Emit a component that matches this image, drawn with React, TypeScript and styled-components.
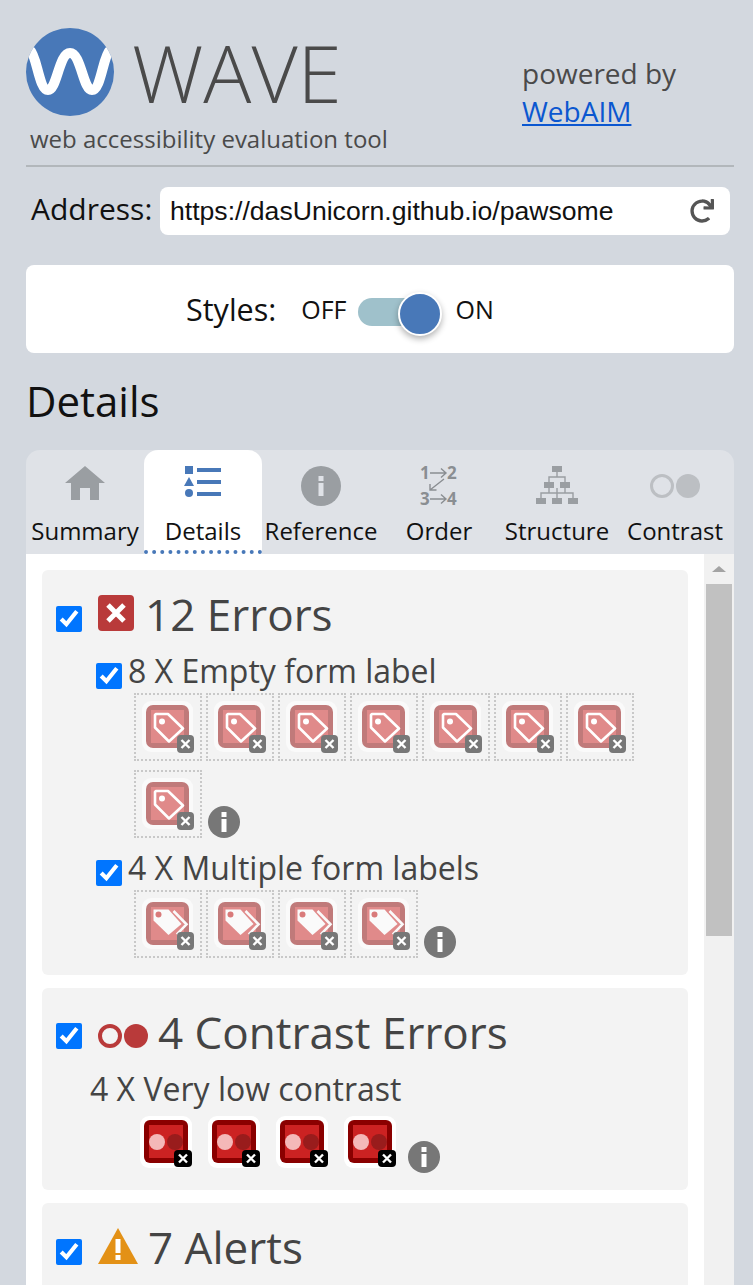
import React from 'react'
import styled, { createGlobalStyle } from 'styled-components'
import { FaRedo } from 'react-icons/fa'

const GlobalStyle = createGlobalStyle`
  html, body {
    margin: 0;
    padding: 0;
    background: #d3d8df;
  }
  * {
    box-sizing: border-box;
  }
`

const Page = styled.div`
  width: 753px;
  height: 1285px;
  overflow: hidden;
  padding: 28px 19px 0 26px;
  font-family: 'Open Sans', sans-serif;
  display: flex;
  flex-direction: column;
`

const Header = styled.header`
  display: flex;
  height: 139px;
  border-bottom: 2px solid #b2b7bb;
`

const Brand = styled.div`
  width: 496px;
  flex: none;
`

const BrandTop = styled.div`
  display: flex;
  align-items: center;
  gap: 18px;
  height: 88px;
`

const WaveTitle = styled.span`
  font-weight: 300;
  font-size: 80px;
  line-height: 88px;
  color: #4a4a4a;
`

const Tagline = styled.div`
  margin: 6px 0 0 4px;
  font-size: 24px;
  line-height: 33px;
  color: #4a4a4a;
`

const Powered = styled.div`
  margin-top: 26px;
  font-size: 28px;
  line-height: 38px;
  color: #4a4a4a;
`

const PoweredLink = styled.a`
  color: #0b57d0;
  text-decoration: underline;
`

const AddressRow = styled.div`
  display: flex;
  align-items: center;
  margin-top: 20px;
  padding-left: 5px;
  height: 48px;
`

const AddressLabel = styled.label`
  font-size: 30px;
  line-height: 40px;
  color: #111;
  width: 129px;
  flex: none;
  margin-bottom: 4px;
`

const AddressBox = styled.div`
  width: 570px;
  height: 48px;
  background: #fff;
  border-radius: 8px;
  display: flex;
  align-items: center;
  justify-content: space-between;
  padding: 0 16px 0 10px;
  font-family: 'Liberation Sans', Arial, sans-serif;
  font-size: 26.6px;
  color: #111;
  svg {
    color: #555;
  }
`

const StylesPanel = styled.div`
  margin-top: 30px;
  height: 88px;
  background: #fff;
  border-radius: 8px;
  display: flex;
  align-items: center;
  padding-left: 160px;
`

const StylesLabel = styled.span`
  font-size: 30.5px;
  color: #111;
  margin-right: 25px;
`

const ToggleText = styled.span`
  font-size: 25px;
  color: #111;
`

const Toggle = styled.div`
  position: relative;
  width: 74px;
  height: 28px;
  margin: 6px 24px 0 11px;
  border-radius: 14px;
  background: #9fc1cb;
`

const Knob = styled.span`
  position: absolute;
  right: -10px;
  top: -6px;
  width: 44px;
  height: 44px;
  border-radius: 50%;
  background: #4878b8;
  border: 2px solid #fff;
  box-shadow: 0 3px 6px rgba(0, 0, 0, 0.3);
`

const PageTitle = styled.h2`
  margin: 21px 0 22px 0;
  font-size: 42px;
  line-height: 54px;
  font-weight: 400;
  color: #111;
`

const Panel = styled.section`
  flex: 1;
  min-height: 0;
  display: flex;
  flex-direction: column;
  border-radius: 14px 14px 0 0;
  overflow: hidden;
`

const TabBar = styled.nav`
  display: grid;
  grid-template-columns: repeat(6, 118px);
  height: 104px;
  flex: none;
  background: #dfe2e7;
`

const Tab = styled.div<{ $active?: boolean }>`
  display: flex;
  flex-direction: column;
  align-items: center;
  padding-top: 16px;
  font-size: 24px;
  line-height: 32px;
  color: #111;
  white-space: nowrap;
  background: ${(p) => (p.$active ? '#fff' : 'transparent')};
  border-radius: ${(p) => (p.$active ? '14px 14px 0 0' : '0')};
  border-bottom: 4px dotted ${(p) => (p.$active ? '#4878b8' : 'transparent')};
  svg {
    display: block;
    margin-bottom: 9px;
    flex: none;
  }
`

const Body = styled.div`
  flex: 1;
  min-height: 0;
  display: flex;
  background: #fff;
`

const List = styled.div`
  flex: 1;
  min-width: 0;
  padding: 16px 16px 0;
  display: flex;
  flex-direction: column;
  gap: 13px;
`

const Scrollbar = styled.div`
  width: 30px;
  flex: none;
  background: #f1f1f1;
  padding: 12px 2px 0;
`

const ScrollArrow = styled.div`
  width: 0;
  height: 0;
  margin: 0 auto 12px;
  border-left: 7px solid transparent;
  border-right: 7px solid transparent;
  border-bottom: 6px solid #a3a3a3;
`

const ScrollThumb = styled.div`
  height: 352px;
  background: #c1c1c1;
`

const Card = styled.article<{ $height?: number }>`
  flex: none;
  background: #f3f3f3;
  border-radius: 6px;
  padding: 14px 14px 6px;
  ${(p) => (p.$height ? `height: ${p.$height}px;` : '')}
`

const CardHeading = styled.div`
  display: flex;
  align-items: center;
  height: 60px;
  font-size: 44px;
  color: #444;
  white-space: nowrap;
`

const Check = styled.input.attrs({ type: 'checkbox', defaultChecked: true })`
  width: 26px;
  height: 26px;
  margin: 10px 16px 0 0;
  flex: none;
  accent-color: #0075ff;
`

const ContrastCheck = styled(Check)`
  margin-top: 8px;
`

const HeadingIcon = styled.svg<{ $up?: number; $down?: number; $gap?: number }>`
  flex: none;
  margin: ${(p) => p.$down ?? 0}px ${(p) => p.$gap ?? 11}px ${(p) => p.$up ?? 0}px 0;
`

const Group = styled.div`
  margin: 8px 0 0 40px;
`

const GroupTitle = styled.div`
  display: flex;
  align-items: center;
  height: 41px;
  padding-bottom: 4px;
  font-size: 32px;
  color: #444;
  white-space: nowrap;
`

const SubCheck = styled(Check)`
  margin: 11px 6px 0 0;
`

const PlainTitle = styled.div`
  font-size: 32px;
  line-height: 40px;
  color: #444;
  margin: 7px 0 0 34px;
`

const TagGrid = styled.div`
  display: flex;
  flex-wrap: wrap;
  align-items: flex-end;
  gap: 9px 4px;
  width: 510px;
  margin: 0 0 11px 38px;
`

const IconBox = styled.div`
  width: 68px;
  height: 68px;
  border: 2px dotted #c8c8c8;
  display: flex;
  align-items: center;
  justify-content: center;
`

const ContrastRow = styled.div`
  display: flex;
  align-items: flex-end;
  gap: 16px;
  margin: 7px 0 16px 84px;
`

const InfoButton = styled.svg<{ $low?: boolean }>`
  flex: none;
  margin-left: ${(p) => (p.$low ? '-4px' : '2px')};
  margin-bottom: ${(p) => (p.$low ? '-5px' : '0')};
`

const InfoIcon = ({ low }: { low?: boolean }) => (
  <InfoButton $low={low} width="32" height="32" viewBox="0 0 32 32">
    <circle cx="16" cy="16" r="16" fill="#777" />
    <rect x="13.5" y="13" width="5" height="13" fill="#fff" />
    <rect x="13.5" y="6" width="5" height="5" fill="#fff" />
  </InfoButton>
)

const BadgeX = ({ fill }: { fill: string }) => (
  <>
    <rect x="35" y="34" width="17" height="18" rx="4" fill={fill} />
    <path d="M39.5 39 47.5 47M47.5 39 39.5 47" stroke="#fff" strokeWidth="2.4" />
  </>
)

const LabelBase = ({ children }: { children: React.ReactNode }) => (
  <svg width="52" height="52" viewBox="0 0 52 52">
    <rect x="0" y="0" width="51" height="51" rx="9" fill="#fafafa" />
    <rect x="4" y="4" width="43" height="43" rx="7" fill="#c07a7a" />
    <rect x="9" y="9" width="33" height="33" fill="#e08a8a" />
    {children}
    <BadgeX fill="#777" />
  </svg>
)

const EmptyLabelIcon = () => (
  <LabelBase>
    <path
      d="M14 13H26L41 27.5 27 40.5 13 26.5V14Z"
      fill="none"
      stroke="#fff"
      strokeWidth="2.6"
      strokeLinejoin="round"
    />
    <circle cx="20" cy="20.5" r="3" fill="#fff" />
  </LabelBase>
)

const MultiLabelIcon = () => (
  <LabelBase>
    <path d="M11.5 11.5H26.5L39.5 26 26.5 37 11.5 22.5Z" fill="#fafafa" strokeLinejoin="round" />
    <circle cx="16.5" cy="16.5" r="3" fill="#d97a7a" />
    <path d="M31.5 13 44.5 26.3 34.8 36.3" fill="none" stroke="#fafafa" strokeWidth="2.6" />
  </LabelBase>
)

const LowContrastIcon = () => (
  <svg width="52" height="52" viewBox="0 0 52 52">
    <rect x="0" y="0" width="52" height="52" rx="9" fill="#fff" />
    <rect x="4" y="4" width="44" height="43" rx="6" fill="#8a0000" />
    <rect x="9" y="9" width="34" height="33" fill="#cc2222" />
    <circle cx="17" cy="26" r="8" fill="#f4b8b8" />
    <circle cx="35" cy="26" r="8" fill="#991c1c" />
    <rect x="34" y="34" width="18" height="17" rx="4" fill="#000" />
    <path d="M39 38.5 47 46.5M47 38.5 39 46.5" stroke="#fff" strokeWidth="2.4" />
  </svg>
)

const HomeIcon = () => (
  <svg width="40" height="40" viewBox="0 0 40 40">
    <path d="M20 0 40 17H34V34H25V22H15V34H6V17H0Z" fill="#9a9ea2" />
  </svg>
)

const DetailsIcon = () => (
  <svg width="40" height="40" viewBox="0 0 40 40">
    <rect x="2" y="0" width="8" height="8" fill="#4878b8" />
    <path d="M6 11 11 20H1Z" fill="#4878b8" />
    <circle cx="6" cy="27" r="4" fill="#4878b8" />
    <rect x="14" y="2" width="24" height="4" fill="#4878b8" />
    <rect x="14" y="14" width="24" height="4" fill="#4878b8" />
    <rect x="14" y="26" width="24" height="4" fill="#4878b8" />
  </svg>
)

const ReferenceIcon = () => (
  <svg width="40" height="40" viewBox="0 0 40 40">
    <circle cx="20" cy="20" r="20" fill="#9a9ea2" />
    <rect x="17.5" y="17" width="5" height="13" fill="#dfe2e7" />
    <rect x="17.5" y="10" width="5" height="5" fill="#dfe2e7" />
  </svg>
)

const OrderText = styled.text`
  font-family: 'Open Sans', sans-serif;
  font-size: 17px;
  font-weight: 700;
  fill: #8a8e92;
`

const OrderIcon = () => (
  <svg width="40" height="40" viewBox="0 0 40 40" overflow="visible">
    <OrderText x="1" y="13">1</OrderText>
    <OrderText x="28" y="13">2</OrderText>
    <OrderText x="1" y="39">3</OrderText>
    <OrderText x="28" y="39">4</OrderText>
    <g fill="none" stroke="#8a8e92" strokeWidth="1.4">
      <path d="M11 7H27M22 2.5 27 7 22 11.5" />
      <path d="M11 33H27M22 28.5 27 33 22 37.5" />
      <path d="M25 13 11 24M11 18V24H17.5" />
    </g>
  </svg>
)

const StructureIcon = () => (
  <svg width="42" height="40" viewBox="0 0 42 40">
    <g fill="#9a9ea2">
      <rect x="16" y="0" width="10" height="6" />
      <rect x="8" y="16" width="10" height="6" />
      <rect x="24" y="16" width="10" height="6" />
      <rect x="0" y="32" width="10" height="6" />
      <rect x="16" y="32" width="10" height="6" />
      <rect x="32" y="32" width="10" height="6" />
    </g>
    <path
      d="M21 6V11M13 16V11H29V16M21 22V32M13 22V27H29V22M5 32V27H37V32"
      fill="none"
      stroke="#9a9ea2"
      strokeWidth="1.4"
    />
  </svg>
)

const ContrastIcon = () => (
  <svg width="50" height="40" viewBox="0 0 50 40">
    <circle cx="12" cy="20" r="10.5" fill="none" stroke="#bcbfc3" strokeWidth="3" />
    <circle cx="38" cy="20" r="12" fill="#bcbfc3" />
  </svg>
)

const LogoMark = () => (
  <svg width="88" height="88" viewBox="0 0 88 88">
    <clipPath id="logo-clip">
      <circle cx="44" cy="44" r="44" />
    </clipPath>
    <circle cx="44" cy="44" r="44" fill="#4878b8" />
    <path
      d="M4 22C11 28 13 62 22 62 31 62 33 25 44 25 55 25 57 62 66 62 75 62 77 28 84 22"
      fill="none"
      stroke="#fff"
      strokeWidth="10"
      clipPath="url(#logo-clip)"
    />
  </svg>
)

const tabs = [
  { label: 'Summary', icon: <HomeIcon /> },
  { label: 'Details', icon: <DetailsIcon />, active: true },
  { label: 'Reference', icon: <ReferenceIcon /> },
  { label: 'Order', icon: <OrderIcon /> },
  { label: 'Structure', icon: <StructureIcon /> },
  { label: 'Contrast', icon: <ContrastIcon /> },
]

export default function App() {
  return (
    <Page>
      <GlobalStyle />
      <Header>
        <Brand>
          <BrandTop>
            <LogoMark />
            <WaveTitle>WAVE</WaveTitle>
          </BrandTop>
          <Tagline>web accessibility evaluation tool</Tagline>
        </Brand>
        <Powered>
          powered by
          <br />
          <PoweredLink href="#webaim">WebAIM</PoweredLink>
        </Powered>
      </Header>

      <AddressRow>
        <AddressLabel>Address:</AddressLabel>
        <AddressBox>
          <span>https://dasUnicorn.github.io/pawsome</span>
          <FaRedo size={24} />
        </AddressBox>
      </AddressRow>

      <StylesPanel>
        <StylesLabel>Styles:</StylesLabel>
        <ToggleText>OFF</ToggleText>
        <Toggle>
          <Knob />
        </Toggle>
        <ToggleText>ON</ToggleText>
      </StylesPanel>

      <PageTitle>Details</PageTitle>

      <Panel>
        <TabBar>
          {tabs.map((t) => (
            <Tab key={t.label} $active={t.active}>
              {t.icon}
              {t.label}
            </Tab>
          ))}
        </TabBar>
        <Body>
          <List>
            <Card>
              <CardHeading>
                <Check />
                <HeadingIcon $up={2} width="36" height="36" viewBox="0 0 36 36">
                  <rect width="36" height="36" rx="4" fill="#b93a3a" />
                  <path d="M10 10 26 26M26 10 10 26" stroke="#fff" strokeWidth="5" />
                </HeadingIcon>
                12 Errors
              </CardHeading>
              <Group>
                <GroupTitle>
                  <SubCheck />8 X Empty form label
                </GroupTitle>
                <TagGrid>
                  {Array.from({ length: 8 }, (_, i) => (
                    <IconBox key={i}>
                      <EmptyLabelIcon />
                    </IconBox>
                  ))}
                  <InfoIcon />
                </TagGrid>
                <GroupTitle>
                  <SubCheck />4 X Multiple form labels
                </GroupTitle>
                <TagGrid>
                  {Array.from({ length: 4 }, (_, i) => (
                    <IconBox key={i}>
                      <MultiLabelIcon />
                    </IconBox>
                  ))}
                  <InfoIcon />
                </TagGrid>
              </Group>
            </Card>

            <Card>
              <CardHeading>
                <ContrastCheck />
                <HeadingIcon $down={8} $gap={10} width="50" height="24" viewBox="0 0 50 24">
                  <circle cx="12" cy="12" r="10" fill="none" stroke="#b93a3a" strokeWidth="4" />
                  <circle cx="38" cy="12" r="12" fill="#b93a3a" />
                </HeadingIcon>
                4 Contrast Errors
              </CardHeading>
              <PlainTitle>4 X Very low contrast</PlainTitle>
              <ContrastRow>
                {Array.from({ length: 4 }, (_, i) => (
                  <LowContrastIcon key={i} />
                ))}
                <InfoIcon low />
              </ContrastRow>
            </Card>

            <Card $height={120}>
              <CardHeading>
                <Check />
                <HeadingIcon $up={2} $gap={10} width="40" height="36" viewBox="0 0 40 36">
                  <path d="M20 0 40 36H0Z" fill="#e39116" />
                  <rect x="17.5" y="11" width="5" height="14" fill="#fff" />
                  <rect x="17.5" y="27" width="5" height="5" fill="#fff" />
                </HeadingIcon>
                7 Alerts
              </CardHeading>
            </Card>
          </List>
          <Scrollbar>
            <ScrollArrow />
            <ScrollThumb />
          </Scrollbar>
        </Body>
      </Panel>
    </Page>
  )
}
